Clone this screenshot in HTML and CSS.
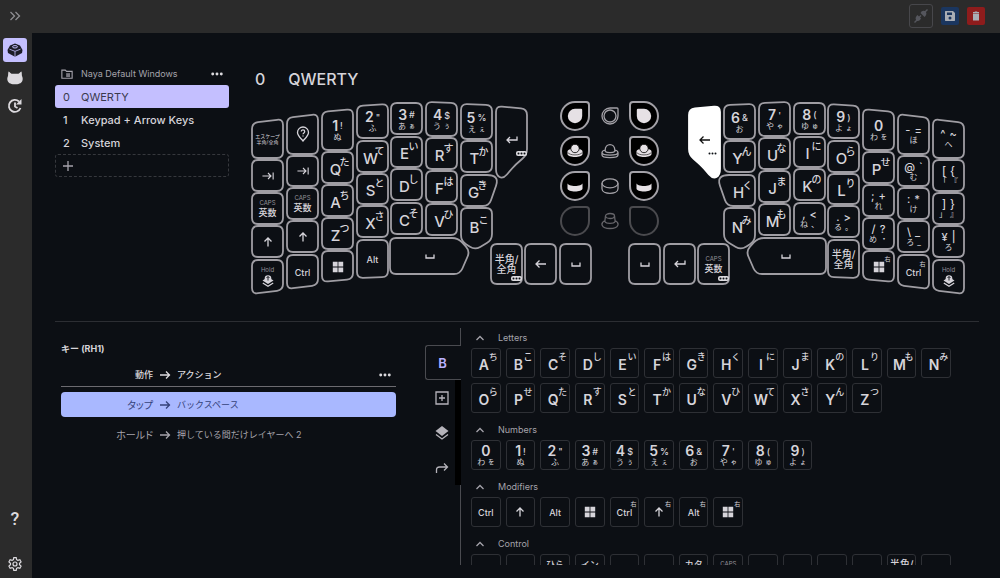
FILE: index.html
```html
<!DOCTYPE html>
<html lang="ja">
<head>
    <meta charset="UTF-8">
    <meta name="viewport" content="width=device-width, initial-scale=1.0">
    <title>Naya Default Windows</title>
    <link rel="stylesheet" href="styles.css">
</head>
<body>
    <svg class="sprite" aria-hidden="true">
        <symbol id="chevrons" viewBox="0 0 12 12"><path d="M1.5 2 5.5 6l-4 4M6.500 2l4 4-4 4" class="line"/></symbol>
        <symbol id="keycap" viewBox="0 0 16 14"><path d="M8 .5 13 2.500 15.500 7 15 10 8.500 13.500h-1L1 10 .5 7 3 2.500z"/><g fill="none" stroke="#c4bfff"><ellipse cx="8" cy="3.800" rx="2.500" ry="1.200"/><path d="M2.500 6.200 8 8.300l5.500-2.100M8 8.300V13.500" stroke-width=".8"/></g></symbol>
        <symbol id="cat" viewBox="0 0 16 13"><path d="M1.500 0C3 .5 3.500 2 4.500 2.200h7C12.500 2 13 .5 14.500 0c.5 1.500.2 3 .5 4.500.8 1.500 1 3.500.3 5C14.500 12 11 12.800 8 12.800S1.500 12 .7 9.500c-.7-1.500-.5-3.500.3-5C1.300 3 1 1.500 1.500 0z"/></symbol>
        <symbol id="update" viewBox="0 0 16 16"><path d="M13.500 10A6 6 0 1 1 12 3.500M8 4.500v4l2.500 1.500" class="line bold"/><path d="M14.500 1v5.500H9z"/></symbol>
        <symbol id="gear" viewBox="0 0 24 24"><path class="line bold" d="M10.200 2.500h3.600l.6 3 2 1.100 2.900-1 1.800 3.100L18.800 11v2l2.300 2.300-1.800 3.100-2.900-1-2 1.100-.6 3h-3.600l-.6-3-2-1.100-2.900 1-1.800-3.100L5.200 13v-2L2.900 8.700l1.800-3.100 2.900 1 2-1.100z"/><circle class="line bold" cx="12" cy="12" r="3"/></symbol>
        <symbol id="plug" viewBox="0 0 16 16"><path d="M1 14l2-2a3.500 3.500 0 0 1 .5-4l1-1L6 8.500l1.500-1.500 1 1L7 9.500 8 10.500l-1 1.500a3.500 3.500 0 0 1-3 1l-2 2zM15 2l-2 2a3.500 3.500 0 0 1-.5 4l-1 1L7.500 5l1-1.500a3.500 3.500 0 0 1 3.500-.5l2-2z"/></symbol>
        <symbol id="save" viewBox="0 0 12 12"><path fill-rule="evenodd" d="M1.500 1H9l2 2v7.500l-.5.5h-9L1 10.500v-9zM3 2.500V5h5V2.500zM6 6.500a1.500 1.500 0 1 0 0 3 1.500 1.500 0 0 0 0-3z"/></symbol>
        <symbol id="trash" viewBox="0 0 12 12"><path d="M3 2h1.500l.5-.5h2l.5.500H9v1H3zM3 3.500h6V10.500H3z"/></symbol>
        <symbol id="folder" viewBox="0 0 14 12"><path class="line" d="M1 1.500h4l1.500 1.500H13v8H1z"/><path d="M6 5h4.500v4.500H6z" opacity=".7"/></symbol>
        <symbol id="plus" viewBox="0 0 12 12"><path class="line" d="M6 1v10M1 6h10"/></symbol>
        <symbol id="dots" viewBox="0 0 14 4"><circle cx="2" cy="2" r="1.700"/><circle cx="7" cy="2" r="1.700"/><circle cx="12" cy="2" r="1.700"/></symbol>
        <symbol id="right" viewBox="0 0 12 12"><path class="line" d="M1 6h10M7 2.500 10.500 6 7 9.500"/></symbol>
        <symbol id="left" viewBox="0 0 12 12"><path class="line" d="M11 6H1M4.500 2.500 1 6l3.500 3.500"/></symbol>
        <symbol id="up" viewBox="0 0 12 12"><path class="line" d="M6 10.500V2M2.500 5.500 6 2l3.500 3.500"/></symbol>
        <symbol id="enter" viewBox="0 0 12 12"><path class="line" d="M11 2.500V6H1M4 3 1 6l3 3"/></symbol>
        <symbol id="space" viewBox="0 0 12 12"><path class="line" d="M2 4.500v3.500h8V4.500"/></symbol>
        <symbol id="tab" viewBox="0 0 14 12"><path class="line" d="M.5 6H10M7 2.500 10.500 6 7 9.500M13 2v8"/></symbol>
        <symbol id="pin" viewBox="0 0 16 16"><path class="line" d="M8 15C5 11.500 2.500 9.500 2.500 6.500a5.500 5.500 0 0 1 11 0C13.500 9.500 11 11.500 8 15zM6.300 5.500c0-2.300 3.400-2.200 3.400 0C9.700 7 8 6.800 8 8.300M8 9.500v1"/></symbol>
        <symbol id="windows" viewBox="0 0 12 12"><path d="M.8.800h4.800v4.800H.8zM6.400.800h4.800v4.800H6.400zM.8 6.400h4.800v4.800H.8zM6.400 6.400h4.800v4.800H6.400z"/></symbol>
        <symbol id="layers" viewBox="0 0 14 14"><path d="M7 0l6.500 5L7 10 .5 5z"/><path class="line" d="M1 8.500 7 13l6-4.500"/></symbol>
        <symbol id="layer-key" viewBox="0 0 12 12"><path d="M.5 5.500 6 2l5.500 3.500L6 9z"/><circle cx="6" cy="3.500" r="3.300"/><path class="line" d="M.8 8 6 11.200 11.200 8"/><path d="M6 1.500v4M4.500 3 6 1.500 7.500 3" fill="none" stroke="#0c0f14" stroke-width=".9"/></symbol>
        <symbol id="add-box" viewBox="0 0 14 14"><path class="line" d="M1 1h12v12H1zM7 4v6M4 7h6"/></symbol>
        <symbol id="redo" viewBox="0 0 14 12"><path class="line" d="M1.500 11V8q0-3 3-3H12M9 1.500 12.500 5 9 8.500"/></symbol>
        <symbol id="caret" viewBox="0 0 12 12"><path class="line" d="M2.500 8 6 4.500 9.500 8"/></symbol>
        <symbol id="badge" viewBox="0 0 11 5"><rect width="11" height="5" rx="2"/><g class="badge-dots"><circle cx="2.500" cy="2.500" r="1"/><circle cx="5.500" cy="2.500" r="1"/><circle cx="8.500" cy="2.500" r="1"/></g></symbol>
        <symbol id="touch" viewBox="0 0 18 18"><path d="M9 1.800h6q1.200 0 1.200 1.200V9A7.200 7.200 0 1 1 9 1.800z"/></symbol>
        <symbol id="ball" viewBox="0 0 18 18"><path d="M1.500 9.500c0-4 15-4 15 0v2.500c0 4-15 4-15 0z"/><path d="M1.800 10.500c2 3.200 12.400 3.200 14.400 0" fill="none" stroke="#000" stroke-width=".6"/><circle cx="9" cy="6.500" r="4.200" stroke="#000" stroke-width=".8"/></symbol>
        <symbol id="dial" viewBox="0 0 18 18"><path d="M1.500 6c0 4 15 4 15 0v5.500c0 4-15 4-15 0z"/></symbol>
        <symbol id="touch-line" viewBox="0 0 18 18"><path class="line" d="M9 1h7q1 0 1 1v7A8 8 0 1 1 9 1z"/><circle class="line" cx="9" cy="9" r="6"/></symbol>
        <symbol id="ball-line" viewBox="0 0 18 18"><path class="line" d="M4.200 9.500V8C4.200.8 13.800.8 13.800 8v1.500c-2 1.500-7.600 1.500-9.600 0M4.200 8C2.500 8.500 1 9.300 1 10.500c0 3.500 16 3.500 16 0 0-1.200-1.500-2-3.200-2.500M1 10.500v2.500c0 3.500 16 3.500 16 0v-2.500"/></symbol>
        <symbol id="dial-line" viewBox="0 0 18 18"><ellipse class="line" cx="9" cy="6.300" rx="8" ry="4.500"/><path class="line" d="M1 6.300v5.500c0 6 16 6 16 0V6.300"/></symbol>
        <symbol id="knob-line" viewBox="0 0 18 18"><ellipse class="line" cx="9" cy="4" rx="4.500" ry="2.500"/><path class="line" d="M4.500 4 3.800 9.500c1.500 2.500 8.900 2.500 10.400 0L13.500 4M4 8.500C-1 11 0 16.500 9 16.500S19 11 14 8.500"/></symbol>
    </svg>

    <header class="topbar">
        <button class="icon-btn" aria-label="Expand"><svg class="icon"><use href="#chevrons"/></svg></button>
        <div class="topbar-actions">
            <button class="top-btn connect" aria-label="Connect"><svg class="icon big"><use href="#plug"/></svg></button>
            <button class="top-btn save" aria-label="Save"><svg class="icon"><use href="#save"/></svg></button>
            <button class="top-btn delete" aria-label="Delete"><svg class="icon"><use href="#trash"/></svg></button>
        </div>
    </header>

    <div class="shell">
        <nav class="rail">
            <button class="rail-btn active" aria-label="Keys"><svg class="icon big"><use href="#keycap"/></svg></button>
            <button class="rail-btn" aria-label="Pet"><svg class="icon big"><use href="#cat"/></svg></button>
            <button class="rail-btn" aria-label="Updates"><svg class="icon big"><use href="#update"/></svg></button>
            <button class="rail-btn help">?</button>
            <button class="rail-btn" aria-label="Settings"><svg class="icon big"><use href="#gear"/></svg></button>
        </nav>

        <main>
            <section class="upper">
                <aside class="layers">
                    <div class="profile">
                        <svg class="icon"><use href="#folder"/></svg>
                        <span>Naya Default Windows</span>
                        <button class="more" aria-label="More"><svg class="icon"><use href="#dots"/></svg></button>
                    </div>
                    <button class="layer active"><span>0</span>QWERTY</button>
                    <button class="layer"><span>1</span>Keypad + Arrow Keys</button>
                    <button class="layer"><span>2</span>System</button>
                    <button class="layer add" aria-label="Add layer"><svg class="icon"><use href="#plus"/></svg></button>
                </aside>
                <div class="board">
                    <h1><span>0</span>QWERTY</h1>
                    <div class="keyboard" id="keyboard">
                        <div class="modules" id="modules"></div>
                    </div>
                </div>
            </section>

            <section class="lower">
                <div class="actions">
                    <h2>キー (RH1)</h2>
                    <div class="action-row head">
                        <span class="trigger">動作</span>
                        <svg class="icon"><use href="#right"/></svg>
                        <span>アクション</span>
                        <button class="more" aria-label="More"><svg class="icon"><use href="#dots"/></svg></button>
                    </div>
                    <button class="action-row active">
                        <span class="trigger">タップ</span>
                        <svg class="icon"><use href="#right"/></svg>
                        <span>バックスペース</span>
                    </button>
                    <button class="action-row">
                        <span class="trigger">ホールド</span>
                        <svg class="icon"><use href="#right"/></svg>
                        <span>押している間だけレイヤーへ 2</span>
                    </button>
                </div>
                <div class="tabs">
                    <button class="tab active">B</button>
                    <button class="tab" aria-label="Add"><svg class="icon"><use href="#add-box"/></svg></button>
                    <button class="tab" aria-label="Layers"><svg class="icon"><use href="#layers"/></svg></button>
                    <button class="tab" aria-label="Redirect"><svg class="icon"><use href="#redo"/></svg></button>
                    <div class="tabs-rest"></div>
                </div>
                <div class="palette" id="palette"></div>
            </section>
        </main>
    </div>
    <script src="script.js"></script>
</body>
</html>
```
FILE: styles.css
```css
* {
    box-sizing: border-box;
}

body {
    margin: 0;
    height: 100vh;
    display: flex;
    flex-direction: column;
    overflow: hidden;
    background: #0c0f14;
    color: #d6d4da;
    font-family: Inter, "Noto Sans CJK JP", sans-serif;
    font-size: 11px;
}

button {
    margin: 0;
    padding: 0;
    border: none;
    background: none;
    color: inherit;
    font: inherit;
    cursor: pointer;
}

.sprite {
    position: absolute;
    width: 0;
    height: 0;
}

.icon {
    display: block;
    flex: none;
    width: 12px;
    height: 12px;
    fill: currentColor;
}

.icon.big {
    width: 16px;
    height: 16px;
}

.line {
    fill: none;
    stroke: currentColor;
    stroke-width: 1.3;
}

.line.bold {
    stroke-width: 1.8;
}

/* Top bar */
.topbar {
    display: flex;
    flex: none;
    align-items: center;
    justify-content: space-between;
    height: 33px;
    padding: 0 15px 2px 9px;
    background: #2b2b2b;
}

.icon-btn {
    color: #8f8f92;
}

.topbar-actions {
    display: flex;
    align-items: center;
    gap: 8px;
}

.top-btn {
    display: flex;
    align-items: center;
    justify-content: center;
    width: 18px;
    height: 18px;
    border-radius: 2px;
    color: #a9adb5;
}

.top-btn.connect {
    width: 24px;
    height: 24px;
    border: 1px solid #47474b;
    border-radius: 3px;
    color: #55565d;
}

.top-btn.save {
    background: #1b365f;
}

.top-btn.delete {
    background: #8e1c1c;
}

/* Left rail */
.shell {
    display: flex;
    flex: 1;
    min-height: 0;
}

.rail {
    display: flex;
    flex: none;
    flex-direction: column;
    gap: 4px;
    width: 32px;
    padding: 5px 5px 2px 3px;
    background: #2b2b2b;
    color: #dcdade;
}

.rail-btn {
    display: flex;
    align-items: center;
    justify-content: center;
    width: 24px;
    height: 24px;
    border-radius: 3px;
}

.rail-btn.active {
    background: #c4bfff;
    color: #1b1b26;
}

.rail-btn.help {
    margin-top: auto;
    margin-bottom: 18px;
    font-family: Roboto, sans-serif;
    font-size: 18px;
    font-weight: 500;
}

/* Layers and keyboard */
main {
    display: flex;
    flex: 1;
    flex-direction: column;
    min-width: 0;
    padding: 0 21px 13px 23px;
}

.upper {
    display: flex;
    flex: none;
    gap: 21px;
    padding: 29px 0 25px;
    border-bottom: 1px solid #2c2e33;
}

.layers {
    display: flex;
    flex: none;
    flex-direction: column;
    width: 174px;
}

.profile {
    display: flex;
    align-items: center;
    gap: 8px;
    height: 23px;
    padding: 0 6px;
    color: #a5a3ab;
    font-size: 9px;
}

.more {
    margin-left: auto;
    color: #dcdade;
}

.layer {
    display: flex;
    align-items: center;
    height: 23px;
    padding-left: 8px;
    border-radius: 3px;
    font-weight: 500;
    text-align: left;
}

.layer span {
    width: 18px;
}

.layer.active {
    background: #c4bfff;
    color: #3b3a4e;
    font-weight: 400;
}

.layer.add {
    border: 1px dashed #36383d;
    padding-left: 6px;
    color: #a5a3ab;
}

.board {
    flex: 1;
}

h1 {
    display: flex;
    gap: 23px;
    margin: 6px 0 10px 5px;
    font-size: 16px;
    font-weight: 500;
    line-height: 22px;
}

.keyboard {
    position: relative;
    width: 718px;
    height: 196px;
}

.cap {
    position: absolute;
    display: flex;
    align-items: center;
    justify-content: center;
}

.cap .outline {
    position: absolute;
    inset: 0;
    width: 100%;
    height: 100%;
    overflow: visible;
    fill: #0c0f14;
    stroke: #9f9da3;
    stroke-width: 1.8;
}

.cap.selected .outline {
    fill: #fff;
    stroke: #fff;
}

.cap.selected {
    color: #111;
}

.cap.index {
    padding-right: 8px;
}

.cap.index.right {
    padding: 0 0 0 8px;
}

.cap.tall,
.cap.pointed {
    padding-bottom: 6px;
}

.cap .icon {
    position: relative;
}

/* Key legends, shared by the keyboard and the palette */
.legend {
    position: relative;
    display: flex;
    flex: none;
    flex-direction: column;
    align-items: center;
    justify-content: center;
    width: 28px;
    height: 28px;
    line-height: 1;
}

.letter {
    padding: 3px 4px 0 0;
    font-size: 14px;
    font-weight: 600;
}

.cap .letter {
    font-size: 15px;
    font-weight: 500;
}

.kana {
    position: absolute;
    top: 3px;
    left: 17px;
    font-size: 9px;
    font-weight: 500;
}

.cap .kana {
    left: 16px;
    font-size: 10px;
}

.pair {
    display: flex;
    align-items: center;
    justify-content: center;
    gap: 2px;
}

.pair b {
    font-size: 14px;
    font-weight: 600;
}

.pair i {
    font-size: 9px;
    font-style: normal;
    font-weight: 500;
}

.pair.low {
    gap: 3px;
    font-size: 8px;
}

.pair.low i {
    font-size: 6px;
}

.pair.even {
    gap: 4px;
    font-size: 11px;
    font-weight: 500;
}

.word {
    font-size: 9px;
    font-weight: 500;
    text-align: center;
    white-space: nowrap;
}

.word.large {
    font-size: 10px;
}

.side {
    position: absolute;
    top: 3px;
    right: 2px;
    font-size: 6px;
}

.hint {
    margin-bottom: 2px;
    color: #94929a;
    font-size: 6px;
    white-space: nowrap;
}

.tiny {
    font-size: 5px;
    line-height: 6px;
    white-space: nowrap;
}

.cap .icon.badge {
    position: absolute;
    right: 0;
    bottom: 3px;
    width: 11px;
    height: 5px;
    fill: #dcdade;
}

.badge-dots {
    fill: #0c0f14;
}

.cap.tall .icon.badge {
    bottom: 23px;
}

.cap.selected .icon.badge {
    right: 2px;
    fill: #fff;
}

.modules {
    position: absolute;
    top: 1px;
    left: 310px;
    display: grid;
    grid-template-columns: 30px 29px 30px;
    gap: 5px;
    align-items: center;
    justify-items: center;
}

.modules .icon {
    width: 18px;
    height: 18px;
    color: #a3a1a7;
}

.module {
    display: flex;
    align-items: center;
    justify-content: center;
    width: 30px;
    height: 30px;
    border: 2px solid #a3a1a7;
    border-radius: 50% 4px 50% 50%;
    background: #000;
}

.module .icon {
    color: #e6e1e5;
}

.module.right {
    border-radius: 4px 50% 50% 50%;
}

.module.right .icon {
    transform: scaleX(-1);
}

.module.empty {
    border-color: #4a4a4e;
    background: none;
}

.modules .icon.dim {
    color: #66656a;
}

/* Key actions */
.lower {
    display: flex;
    flex: 1;
    min-height: 0;
    padding: 6px 0 0 6px;
}

.actions {
    display: flex;
    flex: none;
    flex-direction: column;
    width: 335px;
    margin-right: 29px;
}

h2 {
    margin: 12px 0 5px;
    font-size: 9px;
    font-weight: 700;
    line-height: 18px;
}

.action-row {
    display: flex;
    align-items: center;
    gap: 6px;
    height: 25px;
    margin-bottom: 5px;
    border-radius: 4px;
    color: #a5a3ab;
    font-size: 9px;
    text-align: left;
}

.action-row.head {
    height: 24px;
    margin-bottom: 5px;
    border-bottom: 1px solid #6c6b70;
    border-radius: 0;
    color: #dcdade;
    font-weight: 500;
}

.action-row.active {
    background: #a9b8ff;
    color: #35427a;
}

.trigger {
    width: 92px;
    font-size: 10px;
    font-feature-settings: "palt";
    text-align: right;
}

.head .trigger {
    font-size: 9px;
}

.head .more {
    margin-right: 5px;
}

/* Palette */
.tabs {
    display: flex;
    flex: none;
    flex-direction: column;
    width: 36px;
    padding-top: 17px;
    background: linear-gradient(#4a4b50, #4a4b50) top right / 1px 17px no-repeat;
}

.tab {
    display: flex;
    flex: none;
    align-items: center;
    justify-content: center;
    height: 35px;
    padding-left: 4px;
    border-right: 6px solid #000;
    color: #b5b3ba;
}

.tab .icon {
    width: 14px;
    height: 14px;
}

.tab.active {
    padding: 0 2px 0 0;
    border: 1px solid #4a4b50;
    border-right: none;
    border-radius: 3px 0 0 3px;
    color: #b9b2ff;
    font-size: 13px;
    font-weight: 600;
}

.tabs-rest {
    flex: 1;
    border-right: 1px solid #4a4b50;
}

.palette {
    flex: 1;
    min-width: 0;
    overflow: hidden;
    padding-left: 10px;
}

.group-title {
    display: flex;
    align-items: center;
    gap: 12px;
    width: 100%;
    height: 20px;
    padding: 0 0 1px 3px;
    color: #a5a3ab;
    font-size: 9px;
}

.keys {
    display: grid;
    grid-template-columns: repeat(14, 1fr);
    gap: 5px;
    max-width: 480px;
    margin-bottom: 7px;
}

.key {
    display: flex;
    align-items: center;
    justify-content: center;
    min-width: 0;
    height: 30px;
    border: 1px solid #2e3035;
    border-radius: 3px;
}
```
FILE: script.js
```js
const svg = (name, cls = '') => `<svg class="icon ${cls}"><use href="#${name}"/></svg>`;
const legend = (html) => `<span class="legend">${html}</span>`;

const letter = (ch, kana) => legend(`<span class="letter">${ch}</span><span class="kana">${kana}</span>`);
const number = (d, s, kana, small = '') => legend(
    `<span class="pair"><b>${d}</b>${s ? `<i>${s}</i>` : ''}</span>` +
    `<span class="pair low">${kana}${small ? `<i>${small}</i>` : ''}</span>`);
const symbol = (a, b, kana, small = '') => legend(
    `<span class="pair even"><span>${a}</span><span>${b}</span></span>` +
    `<span class="pair low">${kana}${small ? `<span>${small}</span>` : ''}</span>`);
const icon = (name, side, cls) => legend(svg(name, cls) + (side ? `<span class="side">${side}</span>` : ''));
const word = (text, side) => legend(`<span class="word">${text}</span>` + (side ? `<span class="side">${side}</span>` : ''));
const tiny = (text) => legend(`<span class="tiny">${text}</span>`);
const hinted = (hint, html) => legend(`<span class="hint">${hint}</span>${html}`);

const caps = hinted('CAPS', '<span class="word">英数</span>');
const hold = hinted('Hold', svg('layer-key'));
const zenkaku = legend('<span class="word large">半角/<br>全角</span>');
const badge = svg('badge', 'badge');

const L = {
    A: 'ち', B: 'こ', C: 'そ', D: 'し', E: 'い', F: 'は', G: 'き', H: 'く', I: 'に',
    J: 'ま', K: 'の', L: 'り', M: 'も', N: 'み', O: 'ら', P: 'せ', Q: 'た', R: 'す',
    S: 'と', T: 'か', U: 'な', V: 'ひ', W: 'て', X: 'さ', Y: 'ん', Z: 'つ'
};
const N = [
    ['0', '', 'わ', 'を'], ['1', '!', 'ぬ'], ['2', '"', 'ふ'], ['3', '#', 'あ', 'ぁ'], ['4', '$', 'う', 'ぅ'],
    ['5', '%', 'え', 'ぇ'], ['6', '&amp;', 'お'], ['7', "'", 'や', 'ゃ'], ['8', '(', 'ゆ', 'ゅ'], ['9', ')', 'よ', 'ょ']
];
const l = (ch) => letter(ch, L[ch]);
const n = (i) => number(...N[i]);

// Left half of the board: column x, then top-left, top-right, bottom-left, bottom-right y of each key.
// The right half is the same set mirrored.
const COLUMNS = [
    [2, [23, 19, 58, 58], [60, 60, 91, 91], [93, 93, 124, 124], [126, 126, 157, 157], [160, 160, 194, 190]],
    [37, [18, 14, 54, 54], [56, 56, 86, 86], [88, 88, 119, 119], [121, 121, 152, 152], [155, 155, 189, 185]],
    [72, [12, 9, 50, 50], [52, 52, 83, 83], [85, 85, 116, 116], [118, 118, 149, 149], [151, 151, 182, 179]],
    [107, [6, 4, 38, 38], [41, 41, 72, 72], [74, 74, 104, 104], [106, 106, 137, 137], [140, 140, 178, 177]],
    [141, [3, 3, 34, 34], [37, 37, 67, 67], [69, 69, 100, 100], [103, 103, 134, 134]],
    [176, [2, 3, 36, 36], [38, 38, 69, 69], [71, 71, 102, 102], [104, 104, 135, 135]],
    [211, [4, 5, 39, 39], [41, 41, 72, 72]]
];
const THUMBS = [241, 275, 310];
const KEY_W = 31;
const MIRROR = 716;
const THUMB_MIRROR = 720;

const shapes = [];
COLUMNS.forEach(([x, ...rows]) => rows.forEach(([tl, tr, bl, br]) => {
    shapes.push({ points: [[x, tl], [x + KEY_W, tr], [x + KEY_W, br], [x, bl]] });
}));
THUMBS.forEach((x) => {
    shapes.push({ points: [[x, 144], [x + KEY_W, 144], [x + KEY_W, 184], [x, 184]], mirror: THUMB_MIRROR });
});
shapes.push(
    { points: [[211, 75], [243, 75], [248, 80], [239, 106], [211, 106]], cls: 'index' },
    { points: [[211, 108], [242, 108], [242, 140], [225, 150], [211, 141]], cls: 'pointed' },
    { points: [[140, 138], [208, 138], [220, 151], [210, 174], [140, 174]] },
    { points: [[246, 6], [277, 9], [277, 55], [266, 64], [253, 79], [246, 75]], cls: 'tall' }
);

const LEFT = [
    tiny('エスケープ<br>半角/全角'), icon('tab'), caps, icon('up'), hold,
    icon('pin', '', 'big'), icon('tab'), caps, icon('up'), word('Ctrl'),
    n(1), l('Q'), l('A'), l('Z'), icon('windows'),
    n(2), l('W'), l('S'), l('X'), word('Alt'),
    n(3), l('E'), l('D'), l('C'),
    n(4), l('R'), l('F'), l('V'),
    n(5), l('T'),
    zenkaku + badge, icon('left'), icon('space'),
    l('G'), l('B'), icon('space'), icon('enter') + badge
];
const RIGHT = [
    symbol('^', '~', 'へ'), symbol('[', '{', '「', '『'), symbol(']', '}', '」', '』'), symbol('¥', '|', 'ろ'), hold,
    symbol('-', '=', 'ほ'), symbol('@', '`', 'む'), symbol(':', '*', 'け'), symbol('\\', '_', 'ろ', '_'), word('Ctrl', '右'),
    n(0), l('P'), symbol(';', '+', 'れ'), symbol('/', '?', 'め', '・'), icon('windows', '右'),
    n(9), l('O'), l('L'), symbol('.', '&gt;', 'る', '。'), zenkaku,
    n(8), l('I'), l('K'), symbol(',', '&lt;', 'ね', '、'),
    n(7), l('U'), l('J'), l('M'),
    n(6), l('Y'),
    caps + badge, icon('enter'), icon('space'),
    l('H'), l('N'), icon('space'), icon('left') + badge
];

// Closed path through the points with every corner rounded off
function roundedPath(points, radius) {
    const toward = (a, b) => {
        const len = Math.hypot(b[0] - a[0], b[1] - a[1]);
        const t = Math.min(radius, len / 2) / len;
        return `${a[0] + (b[0] - a[0]) * t} ${a[1] + (b[1] - a[1]) * t}`;
    };
    return points.map((p, i) => {
        const prev = points[(i + points.length - 1) % points.length];
        const next = points[(i + 1) % points.length];
        return `${i ? 'L' : 'M'}${toward(p, prev)}Q${p[0]} ${p[1]} ${toward(p, next)}`;
    }).join('') + 'Z';
}

function addCap(points, html, cls) {
    const xs = points.map((p) => p[0]);
    const ys = points.map((p) => p[1]);
    const x = Math.min(...xs);
    const y = Math.min(...ys);
    const cap = document.createElement('button');
    cap.className = `cap ${cls}`;
    cap.style.left = `${x}px`;
    cap.style.top = `${y}px`;
    cap.style.width = `${Math.max(...xs) - x}px`;
    cap.style.height = `${Math.max(...ys) - y}px`;
    const local = points.map((p) => [p[0] - x, p[1] - y]);
    cap.innerHTML = `<svg class="outline"><path d="${roundedPath(local, 6)}"/></svg>${html}`;
    document.getElementById('keyboard').appendChild(cap);
}

shapes.forEach(({ points, cls = '' }, i) => addCap(points, LEFT[i], cls));
shapes.forEach(({ points, cls = '', mirror = MIRROR }, i) => {
    const selected = cls === 'tall' ? 'selected' : '';
    addCap(points.map(([x, y]) => [mirror - x, y]), RIGHT[i], `${cls} right ${selected}`);
});

document.getElementById('modules').innerHTML = ['touch', 'ball', 'dial'].map((name) =>
    `<button class="module" aria-label="${name}">${svg(name)}</button>${svg(`${name}-line`)}` +
    `<button class="module right" aria-label="${name}">${svg(name)}</button>`
).join('') + `<button class="module empty" aria-label="empty"></button>${svg('knob-line', 'dim')}<button class="module right empty" aria-label="empty"></button>`;

const GROUPS = [
    ['Letters', Object.keys(L).map(l)],
    ['Numbers', N.map((_, i) => n(i))],
    ['Modifiers', [
        word('Ctrl'), icon('up'), word('Alt'), icon('windows'),
        word('Ctrl', '右'), icon('up', '右'), word('Alt', '右'), icon('windows', '右')
    ]],
    ['Control', [
        icon('left'), icon('enter'), word('ひら<br>がな'), word('イン<br>サート'), icon('tab'), icon('space'), word('カタ<br>カナ'),
        caps, icon('space'), icon('space'), icon('space'), icon('left'), zenkaku, icon('enter')
    ]]
];

document.getElementById('palette').innerHTML = GROUPS.map(([title, keys]) =>
    `<button class="group-title">${svg('caret')}${title}</button>` +
    `<div class="keys">${keys.map((k) => `<button class="key">${k}</button>`).join('')}</div>`
).join('');
```
